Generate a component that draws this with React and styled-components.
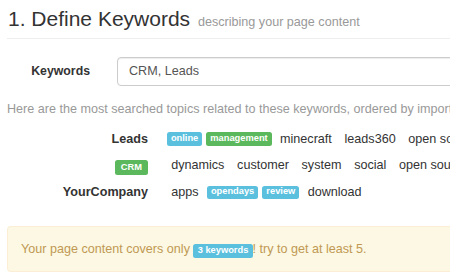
import React from 'react';
import styled, { createGlobalStyle } from "styled-components";

const GlobalStyle = createGlobalStyle`
  html, body {
    margin: 0;
    padding: 0;
    background: #ffffff;
    overflow: hidden;
  }
  body {
    font-family: "Liberation Sans", Arial, sans-serif;
    font-size: 12.6px;
    line-height: 18px;
    color: #333333;
  }
`

const topics = [
  {
    name: 'Leads',
    words: [
      { text: 'online', tag: 'info' },
      { text: 'management', tag: 'success' },
      { text: 'minecraft' },
      { text: 'leads360' },
      { text: 'open source' },
      { text: 'software' },
    ],
  },
  {
    name: 'CRM',
    badge: true,
    words: [
      { text: 'dynamics' },
      { text: 'customer' },
      { text: 'system' },
      { text: 'social' },
      { text: 'open source' },
      { text: 'software' },
    ],
  },
  {
    name: 'YourCompany',
    words: [
      { text: 'apps' },
      { text: 'opendays', tag: 'info' },
      { text: 'review', tag: 'info' },
      { text: 'download' },
    ],
  },
]

const App = () => {
  return (
    <>
      <GlobalStyle />
      <Page>
        <Title>
          1. Define Keywords <small>describing your page content</small>
        </Title>
        <Divider />
        <FormRow>
          <FieldLabel htmlFor="keywords">Keywords</FieldLabel>
          <KeywordInput id="keywords" type="text" defaultValue="CRM, Leads" />
        </FormRow>
        <Intro>
          Here are the most searched topics related to these keywords, ordered by importance.
        </Intro>
        <Topics>
          {topics.map((topic) => (
            <TopicRow key={topic.name}>
              <TopicName>
                {topic.badge ? <Badge tone="success" big>{topic.name}</Badge> : topic.name}
              </TopicName>
              <Words>
                {topic.words.map((word) =>
                  word.tag ? (
                    <Badge key={word.text} tone={word.tag}>{word.text}</Badge>
                  ) : (
                    <Word key={word.text}>{word.text}</Word>
                  )
                )}
              </Words>
            </TopicRow>
          ))}
        </Topics>
        <Alert>
          Your page content covers only <Badge tone="info">3 keywords</Badge>! try to get at least 5.
        </Alert>
      </Page>
    </>
  )
}

const Page = styled.div`
  width: 720px;
  padding: 0 0 0 7px;
  white-space: nowrap;
`

const Title = styled.h1`
  margin: 0;
  padding: 6.5px 0 0 1px;
  font-size: 21px;
  line-height: 23px;
  font-weight: 400;
  color: #333333;

  small {
    margin-left: 2px;
    font-size: 12.6px;
    line-height: 1;
    color: #999999;
  }
`

const Divider = styled.div`
  height: 1px;
  margin-top: 8.5px;
  background: #eeeeee;
`

const FormRow = styled.div`
  display: flex;
  align-items: center;
  margin-top: 17.5px;
`

const FieldLabel = styled.label`
  width: 83px;
  text-align: right;
  font-weight: 700;
  font-size: 12.3px;
`

const KeywordInput = styled.input`
  box-sizing: border-box;
  margin-left: 27px;
  width: 420px;
  height: 29.5px;
  padding: 0 11px;
  border: 1px solid #cccccc;
  border-radius: 4px;
  box-shadow: inset 0 1px 1px rgba(0, 0, 0, 0.075);
  font-family: inherit;
  font-size: 12.6px;
  color: #555555;
  outline: none;
`

const Intro = styled.p`
  margin: 14px 0 0 0;
  color: #999999;
`

const Topics = styled.div`
  margin-top: 8px;
`

const TopicRow = styled.div`
  display: flex;
  align-items: center;
  height: 26.6px;
`

const TopicName = styled.div`
  width: 141px;
  flex-shrink: 0;
  text-align: right;
  font-weight: 700;
`

const Words = styled.div`
  display: flex;
  align-items: center;
  gap: 3.7px;
  margin-left: 18.7px;
`

const Word = styled.span`
  padding: 0 4.5px;
  margin-top: -1px;
`

const Badge = styled.span`
  display: inline-block;
  padding: ${(p) => (p.big ? '3px 6px' : '1.8px 4.2px 2.7px')};
  font-size: 9.3px;
  line-height: 1;
  font-weight: 700;
  color: #ffffff;
  border-radius: 2.5px;
  vertical-align: baseline;
  background: ${(p) => (p.tone === 'success' ? '#5cb85c' : '#5bc0de')};
`

const Alert = styled.div`
  margin-top: 20px;
  padding: 13px;
  background: #fcf8e3;
  border: 1px solid #fbeed5;
  border-right: none;
  border-radius: 4px 0 0 4px;
  color: #c09853;
`

export default App
